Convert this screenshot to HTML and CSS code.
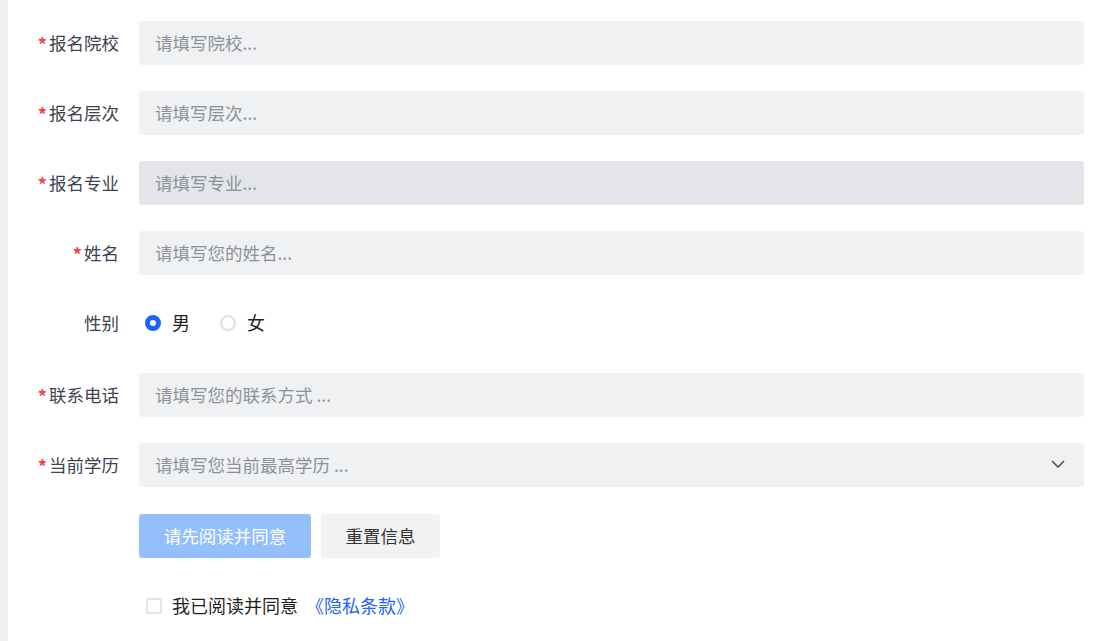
FILE: index.html
```html
<!DOCTYPE html>
<html lang="zh-CN">
<head>
<meta charset="utf-8">
<title>报名</title>
<link rel="stylesheet" href="styles.css">
</head>
<body>
<div class="page">
  <div class="side"></div>
  <form class="form">
    <div class="row">
      <label class="label"><span class="req">*</span>报名院校</label>
      <input class="field" type="text" placeholder="请填写院校...">
    </div>
    <div class="row">
      <label class="label"><span class="req">*</span>报名层次</label>
      <input class="field" type="text" placeholder="请填写层次...">
    </div>
    <div class="row">
      <label class="label"><span class="req">*</span>报名专业</label>
      <input class="field disabled" type="text" placeholder="请填写专业..." disabled>
    </div>
    <div class="row">
      <label class="label"><span class="req">*</span>姓名</label>
      <input class="field" type="text" placeholder="请填写您的姓名...">
    </div>
    <div class="row radio-row">
      <label class="label">性别</label>
      <div class="radios">
        <span class="radio checked"></span><span class="radio-text">男</span>
        <span class="radio"></span><span class="radio-text">女</span>
      </div>
    </div>
    <div class="row">
      <label class="label"><span class="req">*</span>联系电话</label>
      <input class="field" type="text" placeholder="请填写您的联系方式 ...">
    </div>
    <div class="row">
      <label class="label"><span class="req">*</span>当前学历</label>
      <div class="field select">
        <span class="ph">请填写您当前最高学历 ...</span>
        <svg class="chev" width="14" height="8" viewBox="0 0 14 8"><path d="M1 1 L7 7 L13 1" fill="none" stroke="#4a505c" stroke-width="1.6"/></svg>
      </div>
    </div>
    <div class="row btn-row">
      <span class="label"></span>
      <div class="btns">
        <button type="button" class="btn primary">请先阅读并同意</button>
        <button type="button" class="btn reset">重置信息</button>
      </div>
    </div>
    <div class="row agree-row">
      <span class="label"></span>
      <div class="agree">
        <span class="box"></span>
        <span class="agree-text">我已阅读并同意</span>
        <a class="link" href="#">《隐私条款》</a>
      </div>
    </div>
  </form>
</div>
</body>
</html>
```

FILE: styles.css
```css
* { box-sizing: border-box; }
html, body { margin: 0; padding: 0; background: #fff; }
body {
  font-family: "Noto Sans CJK SC", "Noto Sans", sans-serif;
  font-size: 18px;
  color: #3d4350;
}
.page { display: flex; min-height: 641px; }
.side { width: 8px; background: #efefef; flex: none; }
.form {
  flex: 1;
  padding: 21px 33px 0 11px;
  display: flex;
  flex-direction: column;
}
.row {
  display: flex;
  align-items: center;
  height: 44px;
  margin-bottom: 26px;
}
.radio-row { margin-bottom: 28px; }
.btn-row { margin-top: 1px; margin-bottom: 26px; }
.label {
  width: 100px;
  flex: none;
  margin-right: 20px;
  padding-bottom: 2px;
  text-align: right;
  font-size: 17.5px;
  color: #3d4350;
  white-space: nowrap;
}
.req { color: #f04848; font-size: 18px; font-weight: bold; margin-right: 2px; position: relative; top: 2px; }
.field {
  flex: 1;
  height: 44px;
  border: none;
  outline: none;
  border-radius: 3px;
  background: #f0f1f3;
  padding: 0 16px 2px;
  font-family: inherit;
  font-size: 17.5px;
  color: #333;
}
.field::placeholder { color: #8b919b; }
.field.disabled { background: #e4e5e9; }
.field.disabled::placeholder { color: #8b919b; }
.select {
  display: flex;
  align-items: center;
  justify-content: space-between;
  padding-right: 19px;
}
.ph { color: #8b919b; }
.chev { display: block; }
.radios { display: flex; align-items: center; padding-bottom: 2px; }
.radio {
  width: 16px; height: 16px;
  border-radius: 50%;
  border: 2px solid #e1e2e7;
  margin-left: 6px;
  margin-right: 11px;
  background: #fff;
  position: relative; top: 1px;
}
.radio.checked { border: 5px solid #1c63f8; background: #fff; }
.radio-text { color: #1f1f1f; margin-right: 24px; }
.btns { display: flex; gap: 10px; }
.btn {
  height: 44px;
  border: none;
  border-radius: 3px;
  font-family: inherit;
  font-size: 17.5px;
  padding: 0 23px 2px;
  cursor: pointer;
}
.primary { background: #94bffc; color: #fff; width: 172px; }
.reset { background: #f1f2f4; color: #333; width: 119px; }
.agree { display: flex; align-items: center; padding-left: 7px; padding-bottom: 2px; }
.box {
  width: 16px; height: 16px;
  border: 2px solid #e3e4e8;
  border-radius: 2px;
  margin-right: 10px;
  position: relative; top: 1px;
}
.agree-text { color: #1f1f1f; margin-right: 8px; }
.link { color: #1c63f8; text-decoration: none; }
```
